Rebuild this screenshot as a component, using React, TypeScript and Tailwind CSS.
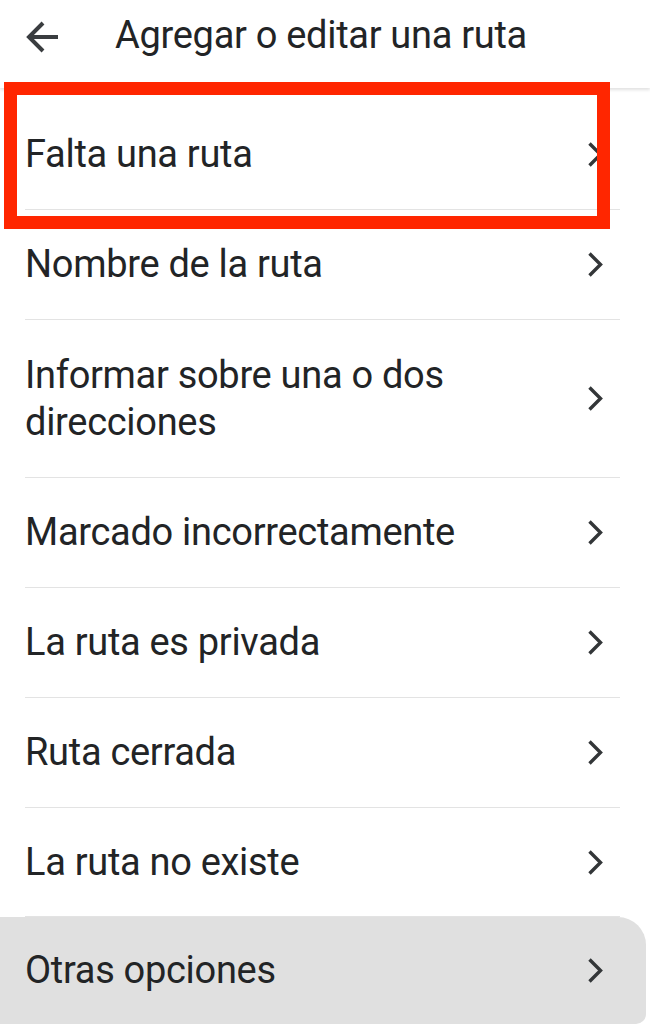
import React from "react";

const Chevron = () => (
  <svg width="17" height="25" viewBox="0 0 17 25" fill="none" className="shrink-0">
    <path d="M2.5 1.5 L13.5 12.5 L2.5 23.5" stroke="#333638" strokeWidth="3.4" strokeLinecap="butt" strokeLinejoin="miter" />
  </svg>
);

const rows: { label: string[]; h: string }[] = [
  { label: ["Nombre de la ruta"], h: "h-[110px]" },
  { label: ["Informar sobre una o dos", "direcciones"], h: "h-[158px]" },
  { label: ["Marcado incorrectamente"], h: "h-[110px]" },
  { label: ["La ruta es privada"], h: "h-[110px]" },
  { label: ["Ruta cerrada"], h: "h-[110px]" },
  { label: ["La ruta no existe"], h: "h-[109px]" },
];

const text = "text-[38px] leading-[47px] tracking-[-0.3px]";

export default function App() {
  return (
    <div
      className="relative w-[650px] h-[1024px] overflow-hidden bg-white text-[#222426]"
      style={{ fontFamily: "Roboto, 'Noto Sans', sans-serif" }}
    >
      <div className="relative z-10 h-[88px] flex items-start bg-white shadow-[0_2px_3px_rgba(0,0,0,0.12)]">
        <svg width="36" height="34" viewBox="0 0 36 34" fill="none" className="ml-[25px] mt-[20px]">
          <path d="M33 17 H4" stroke="#3a3d40" strokeWidth="4" />
          <path d="M18 3 L4 17 L18 31" stroke="#3a3d40" strokeWidth="4" strokeLinejoin="miter" />
        </svg>
        <div className="ml-[54px] mt-[13px] text-[38px] leading-[44px] tracking-[-0.3px]">Agregar o editar una ruta</div>
      </div>

      <div className="flex flex-col">
        <div className="ml-[25px] mr-[30px] h-[122px] flex items-center justify-between border-b border-[#e3e3e3] pt-[12px]">
          <span className={text}>Falta una ruta</span>
          <span className="mr-[16px]"><Chevron /></span>
        </div>
        {rows.map((r, i) => (
          <div
            key={i}
            className={`ml-[25px] mr-[30px] ${r.h} flex items-center justify-between border-b border-[#e3e3e3]`}
          >
            <span className={text}>
              {r.label.map((l, j) => (
                <div key={j}>{l}</div>
              ))}
            </span>
            <span className="mr-[16px]"><Chevron /></span>
          </div>
        ))}
        <div className="w-[646px] h-[107px] bg-[#e0e0e0] rounded-tr-[28px] rounded-br-[10px] pl-[25px] pr-[42px] flex items-center justify-between">
          <span className={text}>Otras opciones</span>
          <Chevron />
        </div>
      </div>

      <div className="absolute left-[4px] top-[82px] w-[606px] h-[147px] border-[13px] border-[#ff2600] z-20" />
    </div>
  );
}
